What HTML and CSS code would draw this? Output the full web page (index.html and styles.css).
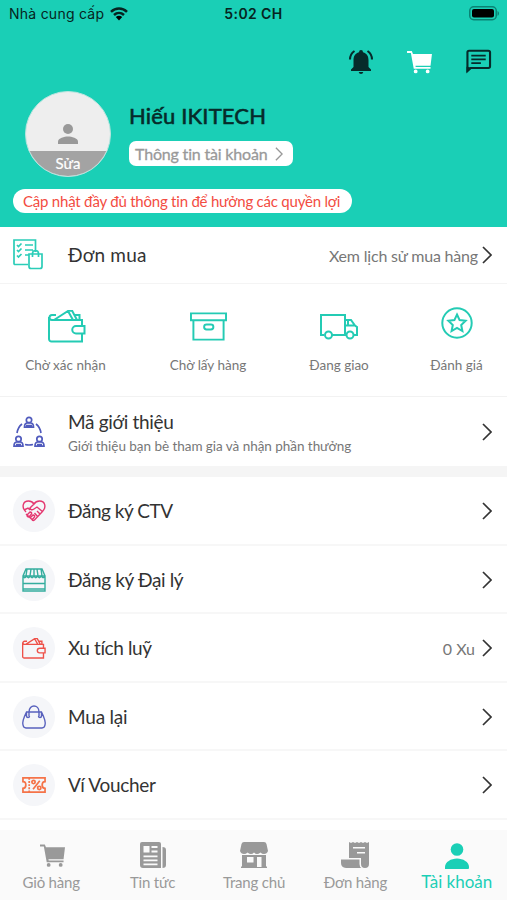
FILE: index.html
```html
<!DOCTYPE html>
<html lang="vi">
<head>
<meta charset="utf-8">
<title>Tài khoản</title>
<link rel="stylesheet" href="styles.css">
</head>
<body>
<svg class="defs" aria-hidden="true">
  <symbol id="chevron" viewBox="0 0 10 18"><path d="M1 1l8 8-8 8"/></symbol>
  <symbol id="cart" viewBox="0 0 26 24"><path d="M0 0h5l1.200 3H26l-1.500 12.500H8.800l.2 1.300h15.500v1.700H7L4 2H0zM9 19.300a2 2 0 1 1 0 4 2 2 0 0 1 0-4zM21.500 19.300a2 2 0 1 1 0 4 2 2 0 0 1 0-4z"/></symbol>
  <symbol id="wallet" viewBox="0 0 38 33"><path d="M34 16v-6H4a3 3 0 0 1-3-3v22a2.500 2.500 0 0 0 2.500 2.500H34v-8M4 10a2.500 2.500 0 0 1 0-5h4M6 10L20 1l5 9M20 1l4-.5 5 9.500M27 5h4.500v5M28 16h8.500v7.500H28a3.750 3.750 0 0 1 0-7.500z"/></symbol>
  <symbol id="person" viewBox="0 0 24 26"><circle cx="12" cy="6.500" r="6.300"/><path d="M0 26v-2c0-5 6-8.500 12-8.500S24 19 24 24v1q0 1-1 1z"/></symbol>
  <symbol id="profile" viewBox="0 0 20 20"><circle cx="10" cy="5" r="5"/><path d="M0 20v-2.500C0 14 6.500 12.500 10 12.500s10 1.500 10 5V20z"/></symbol>
</svg>
<div class="app">
  <header class="hero">
    <div class="status">
      <div class="carrier"><span>Nhà cung cấp</span>
        <svg class="wifi" viewBox="0 0 18 14"><path d="M1 4.800c4.500-4.400 11.500-4.400 16 0M4 8c3-2.800 7-2.800 10 0" fill="none" stroke="#062421" stroke-width="2.500"/><path d="M5.800 10c2-1.600 4.400-1.600 6.400 0L9 13.500z"/></svg>
      </div>
      <time>5:02 CH</time>
      <svg class="battery" viewBox="0 0 31 15"><rect x=".75" y=".75" width="26.500" height="13" rx="4" fill="none" stroke="#0a8374" stroke-width="1.500"/><rect x="3" y="3" width="22" height="8.500" rx="2"/><path d="M28.500 5c2 .8 2 4 0 4.800z" fill="#0a8374"/></svg>
    </div>
    <div class="tools">
      <svg class="bell" viewBox="0 0 24 24"><path d="M12 0q2 0 2 2.200c4 1 5.500 4.300 5.500 8V17l2.500 2.500V21H2v-1.500L4.500 17v-6.800c0-3.700 1.500-7 5.500-8Q10 0 12 0zM9.700 22h4.600q-.4 2-2.300 2t-2.300-2z"/><path d="M1 9.500Q1 4 5.500 1M23 9.500Q23 4 18.500 1" fill="none" stroke="#062b2a" stroke-width="2.100"/></svg>
      <svg class="cart-top"><use href="#cart"/></svg>
      <svg class="chat" viewBox="0 0 26 25"><path d="M1.500 22V3q0-1.700 1.700-1.700h20Q25 1.300 25 3v14.500q0 1.700-1.700 1.700H5L1.500 22z" fill="none" stroke="#062b2a" stroke-width="2.200"/><path d="M.5 18v7l6-6zM5.500 5.500h15v1.900h-15zM5.500 9.400h15v1.900h-15zM5.500 13.200h10v1.900h-10z"/></svg>
    </div>
    <div class="profile">
      <div class="avatar"><svg><use href="#profile"/></svg><span>Sửa</span></div>
      <div class="who">
        <h1>Hiếu IKITECH</h1>
        <a class="info"><span>Thông tin tài khoản</span><svg class="chev"><use href="#chevron"/></svg></a>
      </div>
    </div>
    <div class="notice"><span>Cập nhật đầy đủ thông tin để hưởng các quyền lợi</span></div>
  </header>

  <section class="orders">
    <svg class="order-icon" viewBox="0 0 30 31"><path d="M15 25.500H2q-1 0-1-1V1h21.500v12M12 6h8M12 11h8M12 16h4M4 6l1.500 1.500L8.500 4.500M4 11l1.500 1.500L8.500 9.500M4 16.500L5.500 18l3-3M16 15h13v12.500q0 2-2 2h-9q-2 0-2-2zM19.500 18v-3.500q0-3 3-3t3 3V18"/></svg>
    <h2 class="t-don">Đơn mua</h2>
    <span class="value t-xem">Xem lịch sử mua hàng</span>
    <svg class="chev"><use href="#chevron"/></svg>
  </section>
  <section class="states">
    <div class="state"><svg class="i-wallet"><use href="#wallet"/></svg><span>Chờ xác nhận</span></div>
    <div class="state"><svg class="i-box" viewBox="0 0 38 29"><path d="M1 1h36v7H1zM3.500 8h31v20h-31zM17 12.500h4.500a2.400 2.400 0 0 1 0 5H17a2.400 2.400 0 0 1 0-5z"/></svg><span>Chờ lấy hàng</span></div>
    <div class="state"><svg class="i-truck" viewBox="0 0 38 26"><path d="M4 21H1V1h24v20H12M25 6h6l4 5.500 2 1.500v8h-3M25 11.500h10M28 6v5.500"/><circle cx="8.500" cy="21" r="3.500"/><circle cx="30" cy="21" r="3.500"/></svg><span>Đang giao</span></div>
    <div class="state"><svg class="i-star" viewBox="0 0 32 32"><circle cx="16" cy="16" r="14.700"/><path d="M16 7.500l2.600 5.600 6 .7-4.400 4.200 1.200 6-5.400-3-5.400 3 1.200-6-4.400-4.200 6-.7z"/></svg><span>Đánh giá</span></div>
  </section>
  <section class="referral">
    <svg class="ref-icon" viewBox="0 0 32 32"><circle cx="16" cy="4" r="2.700"/><path d="M11.500 11.200q0-4.200 3-4.200h3q3 0 3 4.200zM13 9.500h6"/><circle cx="5.500" cy="23" r="2.700"/><path d="M1 30.200Q1 26 4 26h3q3 0 3 4.200zM3 28.500h5"/><circle cx="26.500" cy="23" r="2.700"/><path d="M22 30.200Q22 26 25 26h3q3 0 3 4.200zM24 28.500h5M9 8q-4 3-5 9M23 8q4 3 5 9M12 28.500q4 1 8 0"/></svg>
    <div class="copy"><h2 class="t-ma">Mã giới thiệu</h2><p>Giới thiệu bạn bè tham gia và nhận phần thưởng</p></div>
    <svg class="chev"><use href="#chevron"/></svg>
  </section>
  <div class="gap"></div>
  <main class="menu">
    <div class="row"><div class="disc pink"><svg viewBox="0 0 24 22"><path d="M4 12C-1 7 1 1 6.500 1Q10 1 12 4q2-3 5.500-3C23 1 25 7 20 12l-7.500 8q-1.500 1-2.500-.5L4 14M12 4L8 8q1 3 4 1l3-2 6 5M15 11l3.500 3.500M12.500 13l3.500 4M2 10l4-2 2 2M5 15l3-3q2 0 1.500 2L7 17q-2 .2-2-2zm3 3l3-3q2 0 1.500 2L10 20"/></svg></div><h2 class="t-ctv">Đăng ký CTV</h2><svg class="chev"><use href="#chevron"/></svg></div>
    <div class="row"><div class="disc green"><svg viewBox="0 0 24 24"><path d="M1 8v15h22V8L20 1H4zM1 15.500h22M1 8h22M5 1L4 8M9 1L8 8M12 1v7M15 1l1 7M19 1l1 7M1 8q1.800 3.500 3.600 0 1.800 3.500 3.700 0Q10 11.500 12 8q1.800 3.500 3.600 0 1.800 3.500 3.700 0Q21 11.500 23 8M1 21h22"/></svg></div><h2 class="t-daily">Đăng ký Đại lý</h2><svg class="chev"><use href="#chevron"/></svg></div>
    <div class="row"><div class="disc red"><svg class="small-wallet"><use href="#wallet"/></svg></div><h2 class="t-xu">Xu tích luỹ</h2><span class="value t-coin">0 Xu</span><svg class="chev"><use href="#chevron"/></svg></div>
    <div class="row"><div class="disc blue"><svg viewBox="0 0 24 24"><path d="M4.500 7h15C22 12 24 17 23 20q-.5 3-3 3H4q-2.500 0-3-3C0 17 2 12 4.500 7zM7 11V7c0-8 10-8 10 0v4M4.500 7v4q0 1.500 1.500 1.500T7.500 11M16.500 11q0 1.500 1.500 1.500t1.500-1.500V7"/></svg></div><h2 class="t-mua">Mua lại</h2><svg class="chev"><use href="#chevron"/></svg></div>
    <div class="row"><div class="disc orange"><svg viewBox="0 0 25 17"><path d="M1 1h23v4q-3 0-3 3.500t3 3.500v4H1v-4q3 0 3-3.500T1 5zM18.500 4l-7 9"/><path d="M7.500 1v15" stroke-dasharray="2 1.300"/><circle cx="12" cy="5.500" r="1.700"/><circle cx="18" cy="11.500" r="1.700"/></svg></div><h2 class="t-vi">Ví Voucher</h2><svg class="chev"><use href="#chevron"/></svg></div>
  </main>
  <nav class="tabs">
    <a><svg class="n-cart"><use href="#cart"/></svg><span>Giỏ hàng</span></a>
    <a><svg class="n-news" viewBox="0 0 26 26"><path fill-rule="evenodd" d="M2 0h17q2 0 2 2v24H3q-3 0-3-3V2q0-2 2-2zm1.500 4v6.500h6V4zm8 0v2h6V4zm0 4.500v2h6v-2zm-8 5v1.700h14v-1.700zm0 4v1.700h14v-1.700zm0 4v1.700h14v-1.700z"/><path d="M22.500 5q3.500 0 3.500 3v15q0 3-3.500 3z"/></svg><span>Tin tức</span></a>
    <a><svg class="n-shop" viewBox="0 0 28 26"><path fill-rule="evenodd" d="M4 0h20q2 0 2.500 2L28 9q-1 3-4 3-2 0-3.500-1.500Q18.500 12 17 12t-3-1.500Q12.500 12 11 12t-3.500-1.500Q6 12 4 12q-3 0-4-3l1.500-7Q2 0 4 0zM2 13h24v11.500h1V26H1v-1.500h1zm5 2v5.500h6.500V15zm10 0v10h4.500V15z"/></svg><span>Trang chủ</span></a>
    <a><svg class="n-bill" viewBox="0 0 28 26"><path fill-rule="evenodd" d="M8 0l2 1 2-1 2 1 2-1 2 1 2-1 2 1 2-1 2 1 2-1v22q0 4-4 4t-4-4v-6H8zm4 5v1.600h12V5zm4 5v1.600h8V10z"/><path d="M0 17.500h18.500V22q0 3 2 4H5q-5-.5-5-5z"/></svg><span>Đơn hàng</span></a>
    <a class="active"><svg class="n-user"><use href="#person"/></svg><span>Tài khoản</span></a>
  </nav>
</div>
</body>
</html>
```

FILE: styles.css
```css
* { box-sizing: border-box; }
body { margin: 0; background: #fff; font-family: Lato, sans-serif; color: #333; font-variant-ligatures: none; }
h1, h2, p { margin: 0; font-weight: 400; }
h1, span, h2, p, time { white-space: nowrap; }
svg { display: block; flex: none; overflow: visible; }
.defs { position: absolute; width: 0; height: 0; }
.app { width: 507px; height: 900px; overflow: hidden; display: flex; flex-direction: column; }

.hero { height: 227px; flex: none; background: #1acfb6; }
.status { height: 28px; display: grid; grid-template-columns: 1fr auto 1fr; align-items: center; padding: 0 7px 1px 9px; font: 14px/20px Inter, sans-serif; color: #062421; }
.carrier { display: flex; align-items: center; gap: 6px; letter-spacing: .25px; }
.wifi { width: 18px; height: 14px; }
.status time { font-weight: 600; letter-spacing: .4px; margin-right: 2px; }
.battery { width: 31px; height: 15px; justify-self: end; }
.tools { height: 63px; padding: 21px 16px 0 0; display: flex; justify-content: flex-end; align-items: flex-start; fill: #062b2a; }
.bell { width: 24px; height: 24px; margin: 1px 34px 0 0; }
.cart-top { width: 25px; height: 23px; margin: 2px 34px 0 0; fill: #fff; }
.chat { width: 25px; height: 25px; }
.profile { display: flex; padding-left: 25px; height: 98px; }
.avatar { width: 86px; height: 86px; border: 1px solid #b9e5df; border-radius: 50%; background: #eee; overflow: hidden; display: flex; flex-direction: column; align-items: center; justify-content: flex-end; }
.avatar svg { width: 20px; height: 20px; fill: #999; margin-bottom: 7px; }
.avatar span { width: 86px; height: 25px; background: #a3a3a3; color: #fff; text-align: center; font-size: 15px; line-height: 25px; -webkit-text-stroke: .2px #fff; }
.who { padding-left: 18px; }
h1 { font-size: 22px; line-height: 30px; height: 50px; padding-top: 10px; letter-spacing: .17px; color: #062b2a; -webkit-text-stroke: .6px #062b2a; }
.info { width: 164px; height: 25px; border-radius: 7px; background: #fff; display: flex; align-items: center; padding: 0 10px 0 6px; justify-content: space-between; color: #999; font-size: 16px; letter-spacing: -.18px; -webkit-text-stroke: .3px #999; }
.info .chev { width: 8px; height: 14px; stroke: #999; }
.notice { width: 339px; height: 24px; margin-left: 13px; padding-left: 10px; border-radius: 12px; background: #fff; color: #f34c42; font-size: 15px; letter-spacing: -.22px; line-height: 24px; }
.chev { width: 10px; height: 18px; margin-left: auto; fill: none; stroke: #333; stroke-width: 1.700; }
h2 { font-size: 19px; line-height: 24px; }
.value { margin-left: auto; margin-right: 4px; color: #777; font-size: 16px; }
.value + .chev { margin-left: 0; }
.t-don { letter-spacing: .2px; }
.t-xem { letter-spacing: -.18px; }
.t-ma { letter-spacing: -.33px; }
.t-ctv { letter-spacing: -.46px; }
.t-daily { letter-spacing: -.38px; }
.t-xu { letter-spacing: -.4px; }
.t-coin { margin-right: 7px; }
.t-mua { letter-spacing: -.2px; }
.t-vi { letter-spacing: -.3px; }

.orders { height: 56px; flex: none; display: flex; align-items: center; padding: 0 15px 0 13px; }
.order-icon { width: 30px; height: 31px; margin: -2px 25px 0 0; fill: none; stroke: #2bcdb8; stroke-width: 1.700; }
.states { height: 114px; flex: none; border-top: 1px solid #f4f4f4; border-bottom: 1px solid #f2f2f2; display: grid; grid-template-columns: 131px 154px 108px 127px; color: #777; font-size: 13.500px; }
.state { display: flex; flex-direction: column; align-items: center; justify-content: flex-end; height: 90px; line-height: 18px; }
.state svg { fill: none; stroke: #24cbb4; stroke-width: 2; }
.i-wallet { width: 38px; height: 33px; margin: 0 0 13px 2px; }
.i-box { width: 37px; height: 29px; margin-bottom: 15px; }
.i-truck { width: 38px; height: 26px; margin-bottom: 16px; }
.i-star { width: 32px; height: 32px; margin-bottom: 17px; }
.referral { height: 69px; flex: none; display: flex; align-items: center; padding: 0 15px 0 13px; }
.ref-icon { width: 32px; height: 32px; margin-right: 23px; fill: none; stroke: #505bbd; stroke-width: 1.700; }
.copy { flex: 1; padding-top: 3px; }
.copy p { font-size: 13.500px; line-height: 19px; letter-spacing: -.04px; color: #777; padding-top: 3px; }
.gap { height: 11px; flex: none; background: #f5f5f5; }
.menu { height: 353px; flex: none; }
.row { height: 68.500px; border-bottom: 2px solid #f7f7f7; display: flex; align-items: center; padding: 2px 15px 0 13px; }
.disc { width: 42px; height: 42px; margin-right: 13px; border-radius: 50%; background: #f5f6f9; display: flex; align-items: center; justify-content: center; }
.disc svg { width: 24px; height: 24px; fill: none; stroke-width: 1.400; }
.disc .small-wallet { height: 21px; stroke-width: 2.200; }
.pink { stroke: #e43870; }
.green { stroke: #34ad9e; }
.red { stroke: #ee5149; }
.blue { stroke: #5861bd; }
.orange { stroke: #f57348; }
.orange svg { stroke-width: 1.800; }
.tabs { height: 70px; flex: none; background: #fafafa; display: grid; grid-template-columns: repeat(5, 1fr); color: #999; font-size: 15px; letter-spacing: -.2px; }
.tabs a { height: 64px; padding-left: 1px; display: flex; flex-direction: column; align-items: center; justify-content: flex-end; line-height: 24px; fill: #999; }
.tabs svg { margin-bottom: 2px; }
.tabs .n-cart { width: 25px; height: 24px; margin-left: 2px; }
.n-news { width: 26px; height: 26px; }
.n-shop { width: 28px; height: 26px; }
.n-bill { width: 28px; height: 26px; }
.n-user { width: 24px; height: 26px; }
.tabs .active { color: #1acfb6; fill: #1acfb6; font-size: 17px; letter-spacing: 0; }
.tabs .active svg { margin-bottom: 1px; }
```
